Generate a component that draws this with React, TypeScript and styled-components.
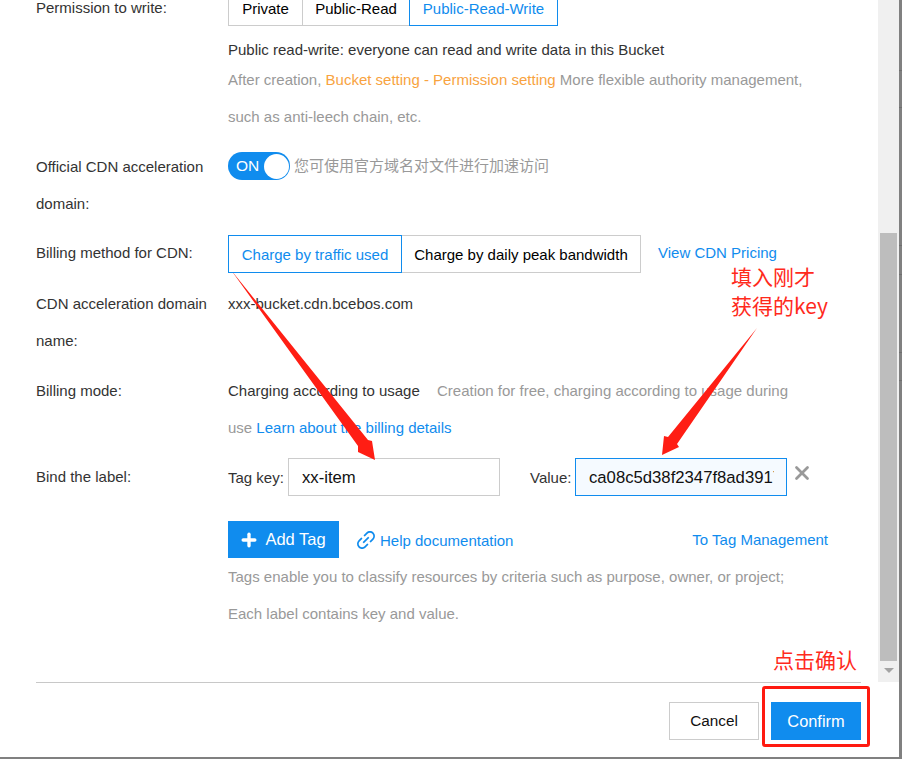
import React from "react";
import styled, { createGlobalStyle } from "styled-components";
import { Plus, X } from "lucide-react";
import { AiOutlineLink } from "react-icons/ai";

const Global = createGlobalStyle`
  html, body { margin: 0; padding: 0; background: #808080; }
  * { box-sizing: border-box; }
`;

const Page = styled.div`
  position: relative;
  width: 902px;
  height: 759px;
  overflow: hidden;
  padding: 0 3px 2px 0;
  background-color: #808080;
  background-image:
    linear-gradient(#6f6f6f, #6f6f6f), linear-gradient(#6f6f6f, #6f6f6f),
    linear-gradient(#6f6f6f, #6f6f6f), linear-gradient(#6f6f6f, #6f6f6f),
    linear-gradient(#6f6f6f, #6f6f6f), linear-gradient(#6f6f6f, #6f6f6f);
  background-size: 3px 1px;
  background-repeat: no-repeat;
  background-position: 899px 70px, 899px 107px, 899px 245px, 899px 274px, 899px 352px, 899px 380px;
  font-family: "Liberation Sans", Arial, "Noto Sans CJK SC", sans-serif;
  font-size: 15px;
  color: #333;
`;

const Dialog = styled.div`
  display: flex;
  flex-direction: column;
  height: 100%;
  background: #fff;
`;

const Body = styled.div`
  display: flex;
  height: 682px;
  flex: none;
`;

const Scroller = styled.div`
  flex: 1;
  min-width: 0;
  overflow: hidden;
  padding-left: 36px;
`;

const Form = styled.div`
  display: flex;
  flex-direction: column;
  gap: 13px;
  margin-top: -11px;
`;

const Row = styled.div<{ $shift?: number }>`
  display: grid;
  grid-template-columns: 192px 1fr;
  margin-top: ${(p) => p.$shift ?? 0}px;
`;

const Label = styled.div`
  line-height: 37px;
  padding-right: 12px;
`;

const Value = styled.div`
  min-width: 0;
`;

const Tall = styled.div`
  line-height: 37px;
`;

const Segmented = styled.div`
  display: flex;
  align-items: center;
`;

const Segment = styled.div<{ $active?: boolean; $tall?: boolean; $w: number }>`
  height: ${(p) => (p.$tall ? 38 : 36)}px;
  width: ${(p) => p.$w}px;
  padding-top: ${(p) => (p.$tall ? 1 : 0)}px;
  margin-right: -1px;
  display: flex;
  align-items: center;
  justify-content: center;
  position: relative;
  z-index: ${(p) => (p.$active ? 1 : 0)};
  border: 1px solid ${(p) => (p.$active ? "#108cee" : "#ccc")};
  color: ${(p) => (p.$active ? "#108cee" : "#000")};
  background: #fff;
`;

const FirstSegments = styled(Segmented)`
  margin-top: 1px;
`;

const BillingSegments = styled(Segmented)`
  margin: 1px 0 -1px;
`;

const Note = styled.div`
  line-height: 23px;
  margin-top: 12px;
`;

const Muted = styled.div`
  color: #999;
  line-height: 37px;
`;

const Orange = styled.span`
  color: #f8a33f;
`;

const Anchor = styled.a`
  color: #108cee;
`;

const ToggleRow = styled.div`
  display: flex;
  align-items: center;
  gap: 4px;
  padding-top: 4px;
`;

const Toggle = styled.div`
  width: 62px;
  height: 28px;
  border-radius: 14px;
  background: #108cee;
  display: flex;
  align-items: center;
  justify-content: space-between;
  padding: 0 1px 0 8px;
  color: #fff;
  font-size: 15.5px;
`;

const Knob = styled.span`
  width: 25px;
  height: 25px;
  border-radius: 50%;
  background: #fff;
`;

const ToggleHint = styled.span`
  color: #999;
  margin-bottom: 3px;
  font-family: "Noto Sans CJK SC", sans-serif;
`;

const BillingLine = styled.div`
  display: flex;
  align-items: flex-start;
  gap: 18px;
`;

const PriceLink = styled(Anchor)`
  line-height: 38px;
`;

const PlainLine = styled.span`
  color: #333;
  margin-right: 13px;
`;

const TagLine = styled.div`
  display: flex;
  align-items: center;
  height: 38px;
`;

const TagCaption = styled.span<{ $w: number }>`
  width: ${(p) => p.$w}px;
  flex: none;
`;

const TagInput = styled.input<{ $focus?: boolean }>`
  width: 212px;
  height: 38px;
  flex: none;
  padding: 1px 12px 0 13px;
  border: 1px solid ${(p) => (p.$focus ? "#108cee" : "#ccc")};
  background: ${(p) => (p.$focus ? "#f5faff" : "#fff")};
  font: 16.7px "Liberation Sans", Arial, sans-serif;
  color: #111;
  outline: none;
  border-radius: 0;
`;

const Remove = styled.span`
  display: flex;
  margin: -8px 0 0 4px;
  color: #999;
`;

const Spaced = styled.span`
  width: 30px;
  flex: none;
`;

const TagActions = styled.div`
  display: flex;
  align-items: center;
  margin-top: 25px;
  height: 37px;
  width: 600px;
`;

const AddButton = styled.div`
  width: 111px;
  height: 37px;
  padding-right: 2px;
  background: #108cee;
  color: #fff;
  display: flex;
  align-items: center;
  justify-content: center;
  gap: 6px;
  font-size: 16.5px;
`;

const HelpLink = styled(Anchor)`
  display: flex;
  align-items: center;
  gap: 2px;
  margin-left: 15px;
  margin-top: 1px;
`;

const ManageLink = styled(Anchor)`
  margin-left: auto;
`;

const Track = styled.div`
  width: 21px;
  flex: none;
  background: #f0f0f0;
  padding: 233px 2px 0;
  display: flex;
  flex-direction: column;
  align-items: center;
`;

const Thumb = styled.div`
  width: 17px;
  height: 428px;
  background: #bdbdbd;
`;

const DownArrow = styled.div`
  margin-top: 7px;
  width: 0;
  height: 0;
  border-left: 5px solid transparent;
  border-right: 5px solid transparent;
  border-top: 5px solid #a3a3a3;
`;

const Footer = styled.div`
  margin: 0 38px 0 36px;
  border-top: 1px solid #c8c8c8;
  padding-top: 19px;
  display: flex;
  justify-content: flex-end;
  gap: 12px;
`;

const FooterButton = styled.div<{ $primary?: boolean }>`
  width: 90px;
  height: 38px;
  display: flex;
  align-items: center;
  justify-content: center;
  font-size: ${(p) => (p.$primary ? "16.4px" : "15.3px")};
  color: ${(p) => (p.$primary ? "#fff" : "#111")};
  background: ${(p) => (p.$primary ? "#108cee" : "#fff")};
  border: 1px solid ${(p) => (p.$primary ? "#108cee" : "#ccc")};
`;

const Arrows = styled.svg`
  position: absolute;
  left: 0;
  top: 0;
  pointer-events: none;
`;

const Callout = styled.div<{ $x: number; $y: number }>`
  position: absolute;
  left: ${(p) => p.$x}px;
  top: ${(p) => p.$y}px;
  color: #ff2a1c;
  font-size: 21px;
  line-height: 29px;
  font-family: "Noto Sans CJK SC", sans-serif;
  white-space: nowrap;
`;

const RedFrame = styled.div`
  position: absolute;
  left: 762px;
  top: 686px;
  width: 108px;
  height: 61px;
  border: 3px solid #ff1a10;
  border-radius: 3px;
  pointer-events: none;
`;

export default function App() {
  return (
    <Page>
      <Global />
      <Dialog>
        <Body>
          <Scroller>
            <Form>
              <Row>
                <Label>Permission to write:</Label>
                <Value>
                  <FirstSegments>
                    <Segment $w={75}>Private</Segment>
                    <Segment $w={108}>Public-Read</Segment>
                    <Segment $w={149} $active>Public-Read-Write</Segment>
                  </FirstSegments>
                  <Note>Public read-write: everyone can read and write data in this Bucket</Note>
                  <Muted>
                    After creation, <Orange>Bucket setting - Permission setting</Orange> More flexible authority management,
                    <br />
                    such as anti-leech chain, etc.
                  </Muted>
                </Value>
              </Row>
              <Row>
                <Label>Official CDN acceleration domain:</Label>
                <Value>
                  <ToggleRow>
                    <Toggle>ON<Knob /></Toggle>
                    <ToggleHint>您可使用官方域名对文件进行加速访问</ToggleHint>
                  </ToggleRow>
                </Value>
              </Row>
              <Row $shift={-1}>
                <Label>Billing method for CDN:</Label>
                <BillingLine>
                  <BillingSegments>
                    <Segment $tall $w={174} $active>Charge by traffic used</Segment>
                    <Segment $tall $w={240}>Charge by daily peak bandwidth</Segment>
                  </BillingSegments>
                  <PriceLink>View CDN Pricing</PriceLink>
                </BillingLine>
              </Row>
              <Row>
                <Label>CDN acceleration domain name:</Label>
                <Tall>xxx-bucket.cdn.bcebos.com</Tall>
              </Row>
              <Row>
                <Label>Billing mode:</Label>
                <Muted>
                  <PlainLine>Charging according to usage</PlainLine> Creation for free, charging according to usage during
                  <br />
                  use <Anchor>Learn about the billing details</Anchor>
                </Muted>
              </Row>
              <Row $shift={-1}>
                <Label>Bind the label:</Label>
                <Value>
                  <TagLine>
                    <TagCaption $w={60}>Tag key:</TagCaption>
                    <TagInput readOnly value="xx-item" />
                    <Spaced />
                    <TagCaption $w={45}>Value:</TagCaption>
                    <TagInput $focus readOnly value="ca08c5d38f2347f8ad39171e2c4b" />
                    <Remove><X size={22} strokeWidth={3} /></Remove>
                  </TagLine>
                  <TagActions>
                    <AddButton><Plus size={20} strokeWidth={4} />Add Tag</AddButton>
                    <HelpLink><AiOutlineLink size={24} />Help documentation</HelpLink>
                    <ManageLink>To Tag Management</ManageLink>
                  </TagActions>
                  <Muted>
                    Tags enable you to classify resources by criteria such as purpose, owner, or project;
                    <br />
                    Each label contains key and value.
                  </Muted>
                </Value>
              </Row>
            </Form>
          </Scroller>
          <Track>
            <Thumb />
            <DownArrow />
          </Track>
        </Body>
        <Footer>
          <FooterButton>Cancel</FooterButton>
          <FooterButton $primary>Confirm</FooterButton>
        </Footer>
      </Dialog>
      <Arrows width="902" height="759" viewBox="0 0 902 759">
        <polygon fill="#ff1e14" points="231,270 368,440 372,441 375,460 358,452 358,446" />
        <polygon fill="#ff1e14" points="757,328 677,444 679,447 662,455 664,436 668,437" />
      </Arrows>
      <Callout $x={731} $y={262}>填入刚才<br />获得的key</Callout>
      <Callout $x={773} $y={645}>点击确认</Callout>
      <RedFrame />
    </Page>
  );
}
